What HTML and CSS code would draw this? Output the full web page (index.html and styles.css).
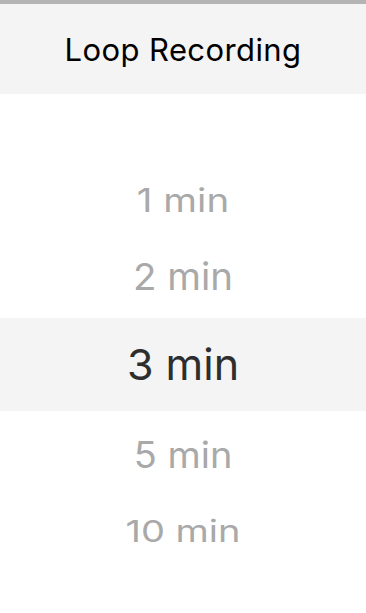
FILE: index.html
```html
<!DOCTYPE html>
<html>
<head>
<meta charset="utf-8">
<link rel="stylesheet" href="styles.css">
</head>
<body>
<div class="topbar"></div>
<header class="header"><h1 class="title">Loop Recording</h1></header>
<div class="picker">
  <div class="row r1"><span class="label">1 min</span></div>
  <div class="row r2"><span class="label">2 min</span></div>
  <div class="row r3 selected"><span class="label">3 min</span></div>
  <div class="row r4"><span class="label">5 min</span></div>
  <div class="row r5"><span class="label">10 min</span></div>
</div>
</body>
</html>
```
FILE: styles.css
```css
html, body { margin: 0; padding: 0; background: #ffffff; }
body { font-family: Inter, "Noto Sans", sans-serif; width: 366px; height: 613px; overflow: hidden; }
.topbar { height: 4px; background: #b4b4b4; }
.header { height: 90px; background: #f4f4f4; display: flex; align-items: center; justify-content: center; }
.title { margin: 0; font-weight: 400; font-size: 31px; color: #000; letter-spacing: 0.4px; }
.picker { padding-top: 68px; display: flex; flex-direction: column; }
.row { display: flex; align-items: center; justify-content: center; color: #a9a9a9; }
.label { display: inline-block; line-height: 1; }
.r1 { height: 76px; }
.r1 .label { font-size: 38.5px; transform: scaleY(0.85); }
.r2 { height: 80px; }
.r2 .label { font-size: 38.5px; transform: translateY(-2px) scaleY(0.97); }
.r3 { height: 93px; background: #f4f4f4; color: #2e2e2e; }
.r3 .label { font-size: 43px; }
.r4 { height: 88px; }
.r4 .label { font-size: 38px; transform: scaleY(0.95); }
.r5 { height: 64px; }
.r5 .label { font-size: 38px; transform: scaleY(0.8); }
```
